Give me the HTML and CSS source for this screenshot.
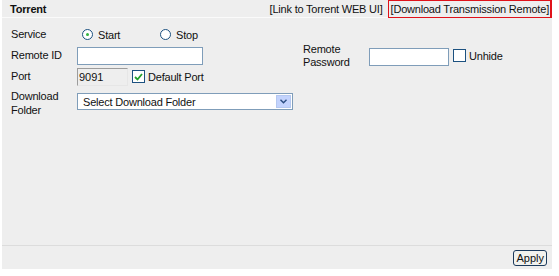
FILE: index.html
```html
<!DOCTYPE html>
<html lang="en">
<head>
    <meta charset="UTF-8">
    <title>Torrent</title>
    <link rel="stylesheet" href="styles.css">
</head>
<body>
    <div class="panel">
        <div class="panel-head">
            <span class="title">Torrent</span>
            <span class="links">
                <a class="link">[Link to Torrent WEB UI]</a>
                <a class="link link-hl">[Download Transmission Remote]</a>
            </span>
        </div>

        <div class="panel-body">
            <div class="row">
                <span class="label">Service</span>
                <label class="radio-item"><span class="radio on"></span>Start</label>
                <label class="radio-item"><span class="radio"></span>Stop</label>
            </div>

            <div class="row">
                <span class="label">Remote ID</span>
                <input type="text" class="field field-id">
                <span class="label label-pass">Remote<br>Password</span>
                <input type="password" class="field field-pass">
                <span class="check"></span>
                <span class="check-text">Unhide</span>
            </div>

            <div class="row">
                <span class="label">Port</span>
                <input type="text" class="field field-port" value="9091" disabled>
                <span class="check on">
                    <svg width="9" height="8" viewBox="0 0 9 8"><path d="M1 4 L3.5 6.5 L8 1" fill="none" stroke="#22a02a" stroke-width="1.8"/></svg>
                </span>
                <span class="check-text">Default Port</span>
            </div>

            <div class="row row-folder">
                <span class="label label-folder">Download<br>Folder</span>
                <div class="select">
                    <span>Select Download Folder</span>
                    <span class="select-btn">
                        <svg width="7" height="5" viewBox="0 0 7 5"><path d="M0.5 0.8 L3.5 3.8 L6.5 0.8" fill="none" stroke="#2a4c80" stroke-width="1.4"/></svg>
                    </span>
                </div>
            </div>
        </div>

        <div class="panel-foot">
            <button class="btn">Apply</button>
        </div>
    </div>
</body>
</html>
```

FILE: styles.css
```css
/* Page */
body {
    margin: 0;
    background-color: #fff;
    font-family: "Liberation Sans", Arial, sans-serif;
    font-size: 11px;
    letter-spacing: -0.2px;
    color: #111;
}

/* Gray panel */
.panel {
    width: 550px;
    height: 269px;
    margin-left: 2px;
    background-color: #eeeeee;
    display: flex;
    flex-direction: column;
}

/* Header bar */
.panel-head {
    height: 17px;
    border-bottom: 1px solid #fafafa;
    display: flex;
    justify-content: space-between;
    align-items: center;
    padding-left: 8px;
}

.title {
    font-weight: bold;
}

.links {
    display: flex;
    align-items: center;
    height: 17px;
}

.link {
    color: #111;
    text-decoration: none;
}

.link-hl {
    margin-left: 5px;
    margin-top: 1px;
    padding: 0 1px 0 2px;
    height: 16px;
    line-height: 16px;
    border: 1px solid #e0121a;
    border-right-width: 2px;
}

/* Form */
.panel-body {
    flex: 1;
    padding: 6px 0 0 9px;
}

.row {
    display: flex;
    align-items: center;
    height: 21px;
}

.label {
    width: 66px;
    line-height: 13px;
}

.radio-item {
    display: flex;
    align-items: center;
    width: 73px;
    margin-left: 5px;
}

.radio {
    width: 11px;
    height: 11px;
    border: 1px solid #1c5180;
    border-radius: 50%;
    background: #fff;
    margin-right: 5px;
    box-sizing: border-box;
    position: relative;
}

.radio.on::after {
    content: "";
    position: absolute;
    left: 3px;
    top: 3px;
    width: 3px;
    height: 3px;
    border-radius: 50%;
    background: #33b33f;
}

.field {
    height: 18px;
    box-sizing: border-box;
    border: 1px solid #7f9db9;
    background: #fff;
    font: inherit;
    padding: 0 2px;
    margin: 0;
}

.field-id {
    width: 126px;
}

.label-pass {
    margin: 0 0 0 100px;
}

.field-pass {
    width: 80px;
    margin-top: 3px;
}

.field-port {
    width: 51px;
    background: #eeeeee;
    color: #111;
    border-color: #9c9c9c #e6e6e6 #e6e6e6 #9c9c9c;
    padding-left: 1px;
}

.check {
    width: 13px;
    height: 13px;
    box-sizing: border-box;
    border: 1px solid #1c5180;
    background: #fff;
    margin: 0 3px 0 4px;
    display: flex;
    align-items: center;
    justify-content: center;
}

.row-folder {
    height: auto;
    align-items: flex-start;
    padding-top: 2px;
}

.label-folder {
    line-height: 14px;
}

.select {
    width: 216px;
    height: 17px;
    margin-top: 4px;
    box-sizing: border-box;
    border: 1px solid #7f9db9;
    background: #fff;
    display: flex;
    align-items: center;
    justify-content: space-between;
    padding-left: 5px;
}

.select-btn {
    width: 15px;
    height: 13px;
    margin-right: 1px;
    background: #c3d3fd;
    border: 1px solid #b5c8f0;
    box-sizing: border-box;
    display: flex;
    align-items: center;
    justify-content: center;
}

/* Footer */
.panel-foot {
    height: 23px;
    border-top: 1px solid #dcdcdc;
    display: flex;
    justify-content: flex-end;
    align-items: center;
    padding-right: 5px;
}

.btn {
    font: inherit;
    color: #111;
    background: #f2f2ee;
    border: 1px solid #1c3a5c;
    border-radius: 3px;
    height: 16px;
    padding: 0 2px;
}
```
